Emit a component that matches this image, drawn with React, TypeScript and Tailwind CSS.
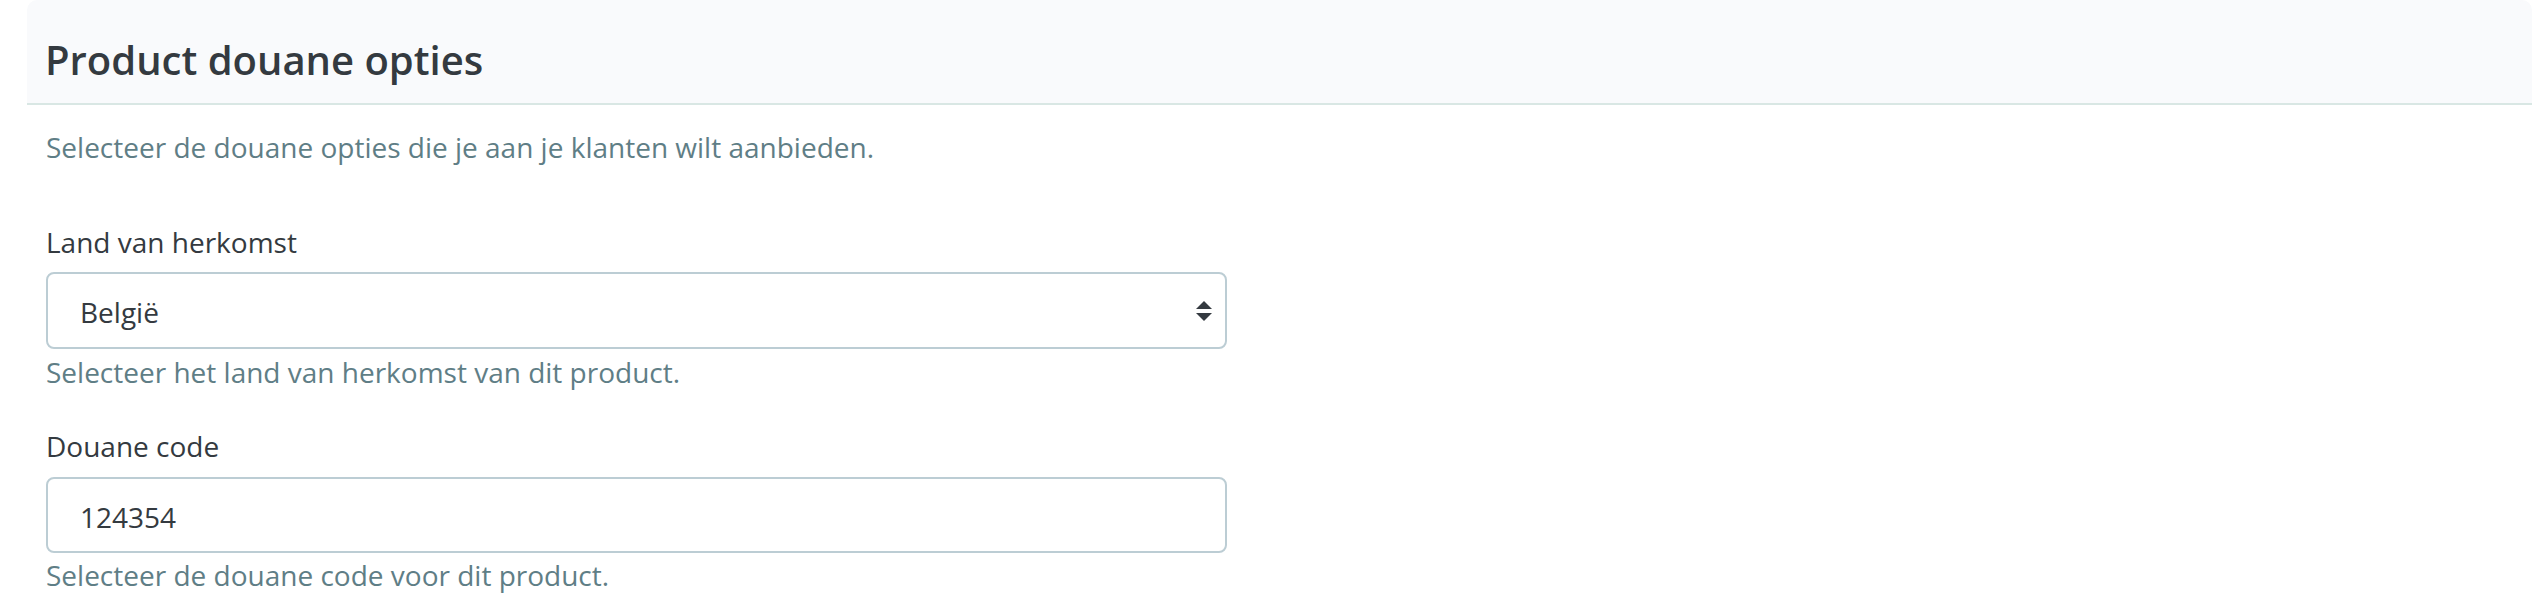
import { ChangeEvent, useState } from "react";

const countries = ["België", "Nederland", "Duitsland", "Frankrijk", "Luxemburg"];

function SelectArrows() {
  return (
    <svg
      viewBox="0 0 4 5"
      className="pointer-events-none absolute right-[15px] top-1/2 h-[20px] w-[16px] -translate-y-1/2"
    >
      <path d="M2 0L0 2h4zm0 5L0 3h4z" fill="#343a40" />
    </svg>
  );
}

export default function App() {
  const [country, setCountry] = useState("België");
  const [code, setCode] = useState("124354");

  return (
    <div
      className="min-h-screen bg-white pl-[27px] pr-[12px] text-[28px] leading-[42px] text-[#343a40]"
      style={{ fontFamily: '"Open Sans", "Noto Sans", sans-serif' }}
    >
      <div className="rounded-t-[10px] border-b-2 border-[#d9e7e4] bg-[#f9fafc] pl-[18px] pt-[35px] pb-[18px]">
        <h2 className="text-[40px] font-semibold leading-[50px] text-[#343a40]">
          Product douane opties
        </h2>
      </div>

      <div className="pl-[19px]">
        <p className="mt-[21px] text-[#5f7e86]">
          Selecteer de douane opties die je aan je klanten wilt aanbieden.
        </p>

        <div className="mt-[53px] w-[1181px]">
          <label className="mb-[9px] block">Land van herkomst</label>
          <div className="relative">
            <select
              value={country}
              onChange={(e: ChangeEvent<HTMLSelectElement>) => setCountry(e.target.value)}
              className="h-[77px] w-full appearance-none rounded-[8px] border-2 border-[#bccdd4] bg-white pl-[32px] pr-[60px] pt-[3px] text-[#343a40] outline-none"
            >
              {countries.map((c) => (
                <option key={c}>{c}</option>
              ))}
            </select>
            <SelectArrows />
          </div>
          <p className="mt-[2px] text-[#5f7e86]">Selecteer het land van herkomst van dit product.</p>
        </div>

        <div className="mt-[32px] w-[1181px]">
          <label className="mb-[10px] block">Douane code</label>
          <input
            type="text"
            value={code}
            onChange={(e) => setCode(e.target.value)}
            className="h-[76px] w-full rounded-[8px] border-2 border-[#bccdd4] bg-white pl-[32px] pr-[20px] pt-[3px] text-[#343a40] outline-none"
          />
          <p className="mt-[1px] text-[#5f7e86]">Selecteer de douane code voor dit product.</p>
        </div>
      </div>
    </div>
  );
}
